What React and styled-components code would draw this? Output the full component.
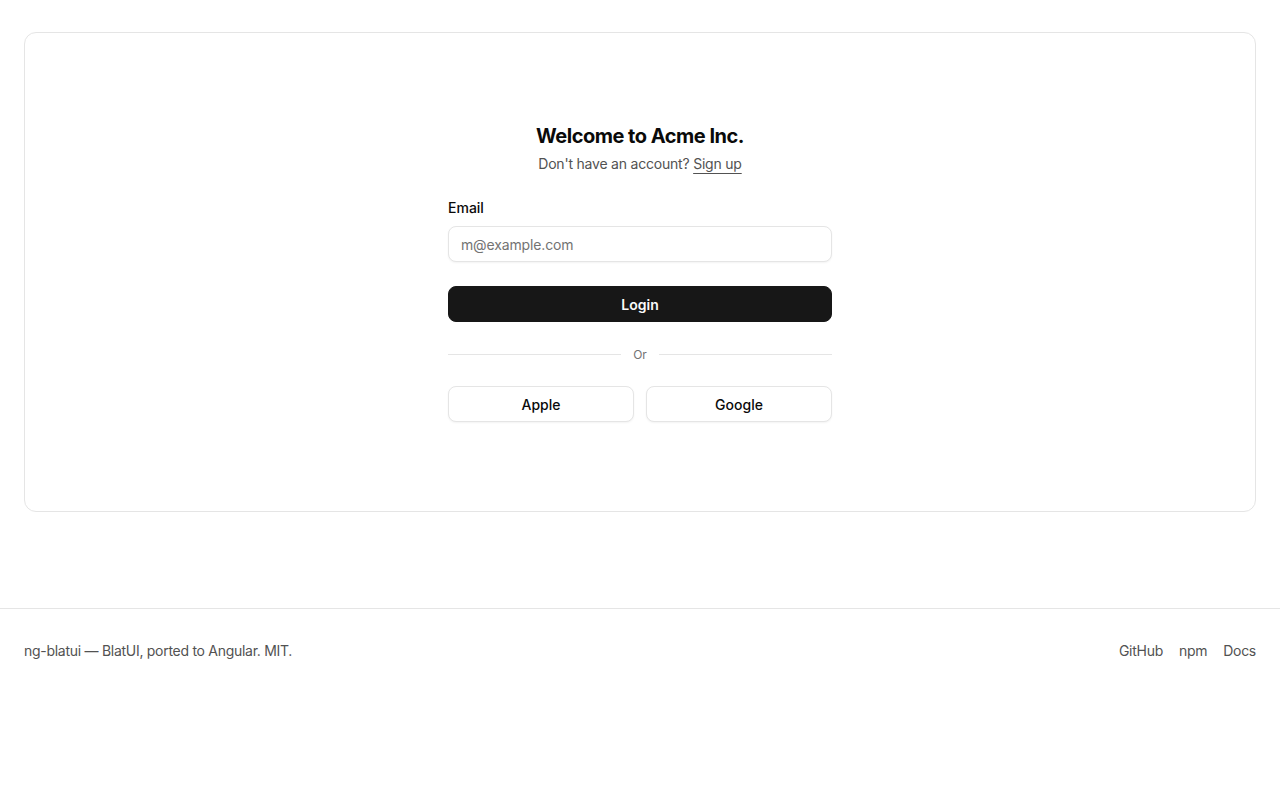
import React from 'react';
import styled, { createGlobalStyle } from 'styled-components';

const GlobalStyle = createGlobalStyle`
  body {
    margin: 0;
    background: #fff;
    font-family: Inter, "Noto Sans", Arial, sans-serif;
    color: #0a0a0a;
  }
  * { box-sizing: border-box; }
`;

const Main = styled.main`
  padding: 32px 24px 96px;
`;

const Card = styled.div`
  height: 480px;
  border: 1px solid #e5e5e5;
  border-radius: 12px;
  display: flex;
  align-items: center;
  justify-content: center;
`;

const Form = styled.form`
  width: 384px;
  display: flex;
  flex-direction: column;
  gap: 24px;
`;

const Header = styled.div`
  display: flex;
  flex-direction: column;
  align-items: center;
  gap: 4px;
`;

const Title = styled.h1`
  margin: 0;
  font-size: 20px;
  line-height: 28px;
  font-weight: 700;
  letter-spacing: -0.025em;
`;

const Subtitle = styled.p`
  margin: 0;
  font-size: 14px;
  line-height: 20px;
  color: #525252;
  letter-spacing: -0.015em;
`;

const Link = styled.a`
  color: #525252;
  text-decoration: underline;
  text-underline-offset: 4px;
`;

const Field = styled.div`
  display: flex;
  flex-direction: column;
  gap: 8px;
`;

const Label = styled.label`
  font-size: 14px;
  line-height: 20px;
  font-weight: 500;
`;

const Input = styled.input`
  height: 36px;
  padding: 0 12px;
  border: 1px solid #e5e5e5;
  border-radius: 8px;
  font: inherit;
  font-size: 14px;
  letter-spacing: -0.01em;
  box-shadow: 0 1px 2px rgba(0, 0, 0, 0.05);
  outline: none;
  &::placeholder { color: #737373; }
`;

const Button = styled.button`
  height: 36px;
  border-radius: 8px;
  font: inherit;
  font-size: 14px;
  font-weight: ${(p) => (p.$primary ? 600 : 500)};
  cursor: pointer;
  background: ${(p) => (p.$primary ? '#171717' : '#fff')};
  color: ${(p) => (p.$primary ? '#fafafa' : '#0a0a0a')};
  border: 1px solid ${(p) => (p.$primary ? '#171717' : '#e5e5e5')};
  box-shadow: ${(p) => (p.$primary ? 'none' : '0 1px 2px rgba(0,0,0,0.05)')};
`;

const Divider = styled.div`
  height: 16px;
  display: flex;
  align-items: center;
  gap: 12px;
  font-size: 12px;
  color: #737373;
  &::before, &::after {
    content: '';
    flex: 1;
    height: 1px;
    background: #e5e5e5;
  }
`;

const Socials = styled.div`
  display: grid;
  grid-template-columns: 1fr 1fr;
  gap: 12px;
`;

const Footer = styled.footer`
  border-top: 1px solid #e5e5e5;
  padding: 32px 24px;
  display: flex;
  justify-content: space-between;
  align-items: center;
  font-size: 14px;
  line-height: 20px;
  color: #525252;
  letter-spacing: -0.02em;
`;

const FooterLinks = styled.nav`
  display: flex;
  gap: 16px;
`;

const FooterLink = styled.a`
  color: #525252;
  text-decoration: none;
`;

export default function App() {
  return (
    <>
      <GlobalStyle />
      <Main>
        <Card>
          <Form onSubmit={(e) => e.preventDefault()}>
            <Header>
              <Title>Welcome to Acme Inc.</Title>
              <Subtitle>
                Don&apos;t have an account? <Link href="#">Sign up</Link>
              </Subtitle>
            </Header>
            <Field>
              <Label htmlFor="email">Email</Label>
              <Input id="email" type="email" placeholder="m@example.com" />
            </Field>
            <Button $primary type="submit">Login</Button>
            <Divider>Or</Divider>
            <Socials>
              <Button type="button">Apple</Button>
              <Button type="button">Google</Button>
            </Socials>
          </Form>
        </Card>
      </Main>
      <Footer>
        <span>ng-blatui — BlatUI, ported to Angular. MIT.</span>
        <FooterLinks>
          <FooterLink href="#">GitHub</FooterLink>
          <FooterLink href="#">npm</FooterLink>
          <FooterLink href="#">Docs</FooterLink>
        </FooterLinks>
      </Footer>
    </>
  );
}
